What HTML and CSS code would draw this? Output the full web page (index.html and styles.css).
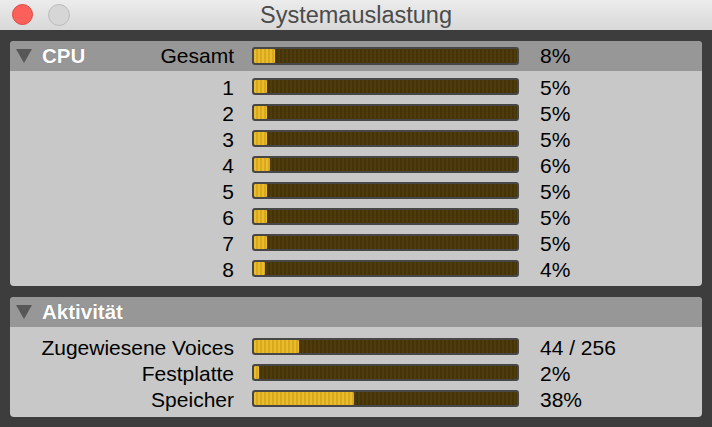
FILE: index.html
```html
<!DOCTYPE html>
<html>
<head>
<meta charset="utf-8">
<link rel="stylesheet" href="styles.css">
</head>
<body>
<div class="window">
  <div class="titlebar">
    <div class="lights">
      <span class="light close"></span>
      <span class="light min"></span>
    </div>
    <div class="title">Systemauslastung</div>
  </div>
  <div class="content">
    <section class="panel panel-cpu">
      <div class="row head">
        <div class="label head-label">
          <span class="head-left">
            <svg class="tri" width="16" height="14" viewBox="0 0 16 14"><polygon points="0,0 16,0 8,14" fill="#575757"/></svg>
            <span class="head-title">CPU</span>
          </span>
          <span class="head-right">Gesamt</span>
        </div>
        <div class="bar"><div class="fill" style="width:8%"></div></div>
        <div class="value">8%</div>
      </div>
      <div class="rows">
        <div class="row"><div class="label">1</div><div class="bar"><div class="fill" style="width:5%"></div></div><div class="value">5%</div></div>
        <div class="row"><div class="label">2</div><div class="bar"><div class="fill" style="width:5%"></div></div><div class="value">5%</div></div>
        <div class="row"><div class="label">3</div><div class="bar"><div class="fill" style="width:5%"></div></div><div class="value">5%</div></div>
        <div class="row"><div class="label">4</div><div class="bar"><div class="fill" style="width:6%"></div></div><div class="value">6%</div></div>
        <div class="row"><div class="label">5</div><div class="bar"><div class="fill" style="width:5%"></div></div><div class="value">5%</div></div>
        <div class="row"><div class="label">6</div><div class="bar"><div class="fill" style="width:5%"></div></div><div class="value">5%</div></div>
        <div class="row"><div class="label">7</div><div class="bar"><div class="fill" style="width:5%"></div></div><div class="value">5%</div></div>
        <div class="row"><div class="label">8</div><div class="bar"><div class="fill" style="width:4%"></div></div><div class="value">4%</div></div>
      </div>
    </section>
    <section class="panel panel-act">
      <div class="row head">
        <div class="label head-label">
          <span class="head-left">
            <svg class="tri" width="16" height="14" viewBox="0 0 16 14"><polygon points="0,0 16,0 8,14" fill="#575757"/></svg>
            <span class="head-title">Aktivität</span>
          </span>
        </div>
      </div>
      <div class="rows rows-act">
        <div class="row"><div class="label">Zugewiesene Voices</div><div class="bar"><div class="fill" style="width:17.2%"></div></div><div class="value">44 / 256</div></div>
        <div class="row"><div class="label">Festplatte</div><div class="bar"><div class="fill" style="width:2%"></div></div><div class="value">2%</div></div>
        <div class="row"><div class="label">Speicher</div><div class="bar"><div class="fill" style="width:38%"></div></div><div class="value">38%</div></div>
      </div>
    </section>
  </div>
</div>
</body>
</html>
```
FILE: styles.css
```css
html, body {
  margin: 0;
  padding: 0;
  background: #3d3d3d;
}
body {
  width: 712px;
  height: 427px;
  overflow: hidden;
  font-family: "Liberation Sans", Arial, sans-serif;
}
.window {
  width: 712px;
  height: 427px;
  background: #3d3d3d;
  display: flex;
  flex-direction: column;
}
.titlebar {
  height: 30px;
  flex: none;
  background: linear-gradient(#ececec, #d8d8d8);
  display: flex;
  align-items: center;
  position: relative;
}
.lights {
  display: flex;
  gap: 15px;
  padding-left: 12px;
  position: relative;
  z-index: 1;
}
.light {
  width: 21px;
  height: 21px;
  border-radius: 50%;
  box-sizing: border-box;
  display: block;
}
.light.close {
  background: #fc605b;
  border: 1px solid #e0443e;
}
.light.min {
  width: 22px;
  height: 22px;
  background: #d6d6d6;
  border: 1px solid #bdbdbd;
}
.title {
  position: absolute;
  left: 0;
  right: 0;
  top: 0;
  height: 30px;
  line-height: 31px;
  text-align: center;
  font-size: 23.5px;
  color: #4b4b4b;
}
.content {
  padding: 11px 10px 10px 10px;
  display: flex;
  flex-direction: column;
  gap: 11px;
}
.panel {
  background: #c8c8c8;
  border-radius: 4px;
  overflow: hidden;
}
.row {
  display: grid;
  grid-template-columns: 224px 267px 1fr;
  column-gap: 18px;
  height: 26px;
  align-items: center;
  font-size: 21px;
  color: #000;
}
.row .value {
  margin-left: 3px;
}
.row .label,
.row .value {
  line-height: 26px;
  position: relative;
  top: 1.5px;
  white-space: nowrap;
}
.row .label {
  text-align: right;
}
.row.head {
  height: 30px;
  background: #979797;
}
.row.head .label,
.row.head .value {
  top: 0;
}
.head-label {
  display: flex;
  justify-content: space-between;
  align-items: center;
}
.head-left {
  display: flex;
  align-items: center;
  gap: 10px;
  padding-left: 6px;
}
.tri {
  display: block;
}
.head-title {
  font-weight: bold;
  color: #fff;
  font-size: 20.5px;
  text-shadow: 0 0 1px rgba(0,0,0,0.25);
}
.bar {
  height: 17px;
  box-sizing: border-box;
  border: 2px solid #474747;
  border-radius: 3px;
  background: repeating-linear-gradient(90deg, #4e3c0b 0px, #4e3c0b 2px, #453409 2px, #453409 4px);
  overflow: hidden;
  display: flex;
}
.head .bar {
  height: 18px;
}
.fill {
  height: 100%;
  background: repeating-linear-gradient(90deg, #eabc2a 0px, #eabc2a 2px, #d9a821 2px, #d9a821 4px);
  border-radius: 1px;
}
.rows {
  padding: 2px 0 5px 0;
}
.rows-act {
  padding: 6px 0 6px 0;
}
```
